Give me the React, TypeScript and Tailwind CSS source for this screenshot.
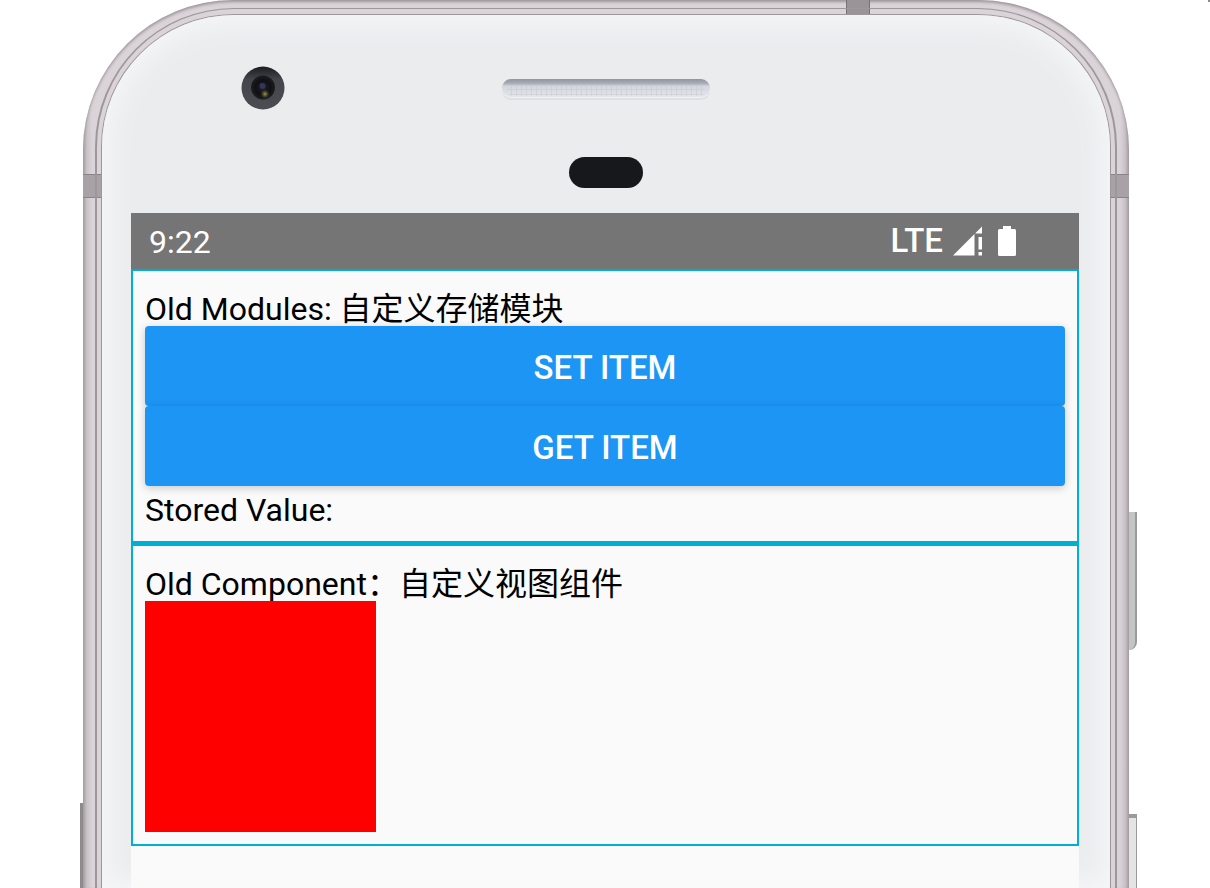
import React from 'react';

interface SectionProps {
  title: string;
  className?: string;
  children: React.ReactNode;
}

function Section({ title, className = '', children }: SectionProps) {
  return (
    <section className={`border-2 border-[#00b0d0] p-3 ${className}`}>
      <h2 className="h-[43px] leading-[52px]">{title}</h2>
      {children}
    </section>
  );
}

function ModuleButton({ children }: { children: React.ReactNode }) {
  return (
    <button
      type="button"
      className="block h-20 w-full cursor-pointer rounded bg-[#1c95f4] pt-1 text-[33px] font-medium text-white uppercase shadow-[0_2px_8px_rgba(0,0,0,0.2)]"
    >
      {children}
    </button>
  );
}

function SignalIcon() {
  return (
    <svg className="h-[30px] w-[30px]" viewBox="0 0 30 30" fill="white" aria-hidden="true">
      <path d="M0 29.500 21.500 8V29.500Z" />
      <path d="M22.500 7 29 .5V7.500H22.500Z" />
      <path d="M25.500 11H29V23.500H25.500ZM25.500 26H29V29.500H25.500Z" />
    </svg>
  );
}

function BatteryIcon() {
  return (
    <svg className="h-[30px] w-5" viewBox="0 0 20 30" fill="white" aria-hidden="true">
      <path d="M6 0H14V3H17.500Q19 3 19 4.500V28.500Q19 30 17.500 30H2.500Q1 30 1 28.500V4.500Q1 3 2.500 3H6Z" />
    </svg>
  );
}

function StatusBar() {
  return (
    <div className="flex h-14 items-center bg-[#757575] pr-[62px] pl-[18px] text-white">
      <span className="flex-1 pt-0.5">9:22</span>
      <span className="mr-2.5 text-[33px] font-medium">LTE</span>
      <SignalIcon />
      <span className="w-3.5" />
      <BatteryIcon />
    </div>
  );
}

function Camera() {
  return (
    <svg className="h-11 w-11" viewBox="0 0 44 44" aria-hidden="true">
      <defs>
        <linearGradient id="ring" x1="0" y1="0" x2="0" y2="1">
          <stop offset="0" stopColor="#1b1c20" />
          <stop offset="0.3" stopColor="#45464b" />
          <stop offset="1" stopColor="#4c4d52" />
        </linearGradient>
        <radialGradient id="lens">
          <stop offset="0" stopColor="#20202c" />
          <stop offset="0.6" stopColor="#101014" />
          <stop offset="1" stopColor="#1c1d20" />
        </radialGradient>
        <radialGradient id="glint">
          <stop offset="0" stopColor="#a3a04c" />
          <stop offset="1" stopColor="#3b3b1c" stopOpacity="0" />
        </radialGradient>
      </defs>
      <circle cx="22" cy="22" r="21.500" fill="url(#ring)" />
      <circle cx="22" cy="21.500" r="12" fill="url(#lens)" />
      <circle cx="21.500" cy="20" r="3" fill="#34345c" />
      <circle cx="24" cy="28" r="5" fill="url(#glint)" />
    </svg>
  );
}

function Speaker() {
  return (
    <svg className="h-6 w-[210px]" viewBox="0 0 210 24" aria-hidden="true">
      <defs>
        <linearGradient id="slot" x1="0" y1="0" x2="0" y2="1">
          <stop offset="0" stopColor="#8f949f" />
          <stop offset="0.25" stopColor="#a9aeb8" />
          <stop offset="0.4" stopColor="#d3d6dd" />
          <stop offset="1" stopColor="#e4e6ea" />
        </linearGradient>
        <pattern id="mesh" width="5" height="5" patternUnits="userSpaceOnUse">
          <path d="M0 .5H5M.5 0V5" stroke="#c3c6ce" strokeWidth="1" opacity="0.5" />
        </pattern>
      </defs>
      <rect x="1" y="3" width="208" height="18" rx="9" fill="#dfe0e3" />
      <rect x="1" y="1" width="208" height="18" rx="9" fill="#f0f1f2" />
      <rect x="1" y="0" width="208" height="18" rx="9" fill="url(#slot)" />
      <rect x="6" y="6" width="198" height="11" rx="5" fill="url(#mesh)" />
    </svg>
  );
}

function FaceTop() {
  return (
    <div className="grid h-[198px] grid-cols-[1fr_auto_1fr]">
      <div className="pt-[51px] pl-[139px]">
        <Camera />
      </div>
      <div className="flex flex-col items-center pt-16">
        <Speaker />
        <div className="mt-[54px] h-[31px] w-[74px] rounded-full bg-[#16181c]" />
      </div>
    </div>
  );
}

function Screen() {
  return (
    <main className="mr-[31px] ml-[29px] flex-1 bg-[#fafafa]">
      <StatusBar />
      <Section title="Old Modules: 自定义存储模块">
        <ModuleButton>Set Item</ModuleButton>
        <ModuleButton>Get Item</ModuleButton>
        <p className="h-[43px] leading-[48px]">Stored Value:</p>
      </Section>
      <Section title="Old Component：自定义视图组件" className="border-t-[3px]">
        <div className="size-[231px] bg-[#ff0000]" />
      </Section>
    </main>
  );
}

export default function App() {
  return (
    <div
      className="flex min-h-screen bg-white text-[32px] leading-10 text-black"
      style={{ fontFamily: 'Roboto, "Noto Sans CJK SC", sans-serif' }}
    >
      <div className="w-[83px] pt-[803px] pl-20">
        <div className="h-full bg-[#8f8b8d]" />
      </div>

      <div className="relative flex flex-1 flex-col overflow-hidden rounded-t-[150px] bg-[linear-gradient(to_right,#a8a1a5,#c9c2c6_4px,#dad3d7_9px,#dad3d7_calc(100%-9px),#c9c2c6_calc(100%-4px),#a8a1a5)] px-3 pt-2 shadow-[inset_0_2px_3px_#9d969a]">
        <div className="absolute top-0 right-[259px] h-4 w-6 border-x border-[#777074] bg-[#9a9397]" />
        <div className="absolute top-[174px] left-0 h-6 w-full border-y border-[#8a8387] bg-[#a8a1a5]" />
        <div className="relative flex flex-1 flex-col rounded-t-[139px] border-x-2 border-t border-[#9d969a] px-[5px] pt-1.5">
          <div className="flex flex-1 flex-col rounded-t-[132px] bg-[#ebecee] shadow-[0_0_0_1px_#9d969a,inset_0_0_26px_8px_#f5f6f8]">
            <FaceTop />
            <Screen />
          </div>
        </div>
      </div>

      <div className="flex w-[81px] flex-col">
        <div className="h-[2px] w-[2px] self-end bg-[#8f8b8d]" />
        <div className="mt-[510px] h-[138px] w-2 rounded-br-lg border-r-2 border-[#9b9b9b] bg-[#c3c5c5]" />
        <div className="mt-[164px] w-2 flex-1 border-t-4 border-r border-[#9b9b9b] bg-[#e3e4e3]" />
      </div>
    </div>
  );
}
